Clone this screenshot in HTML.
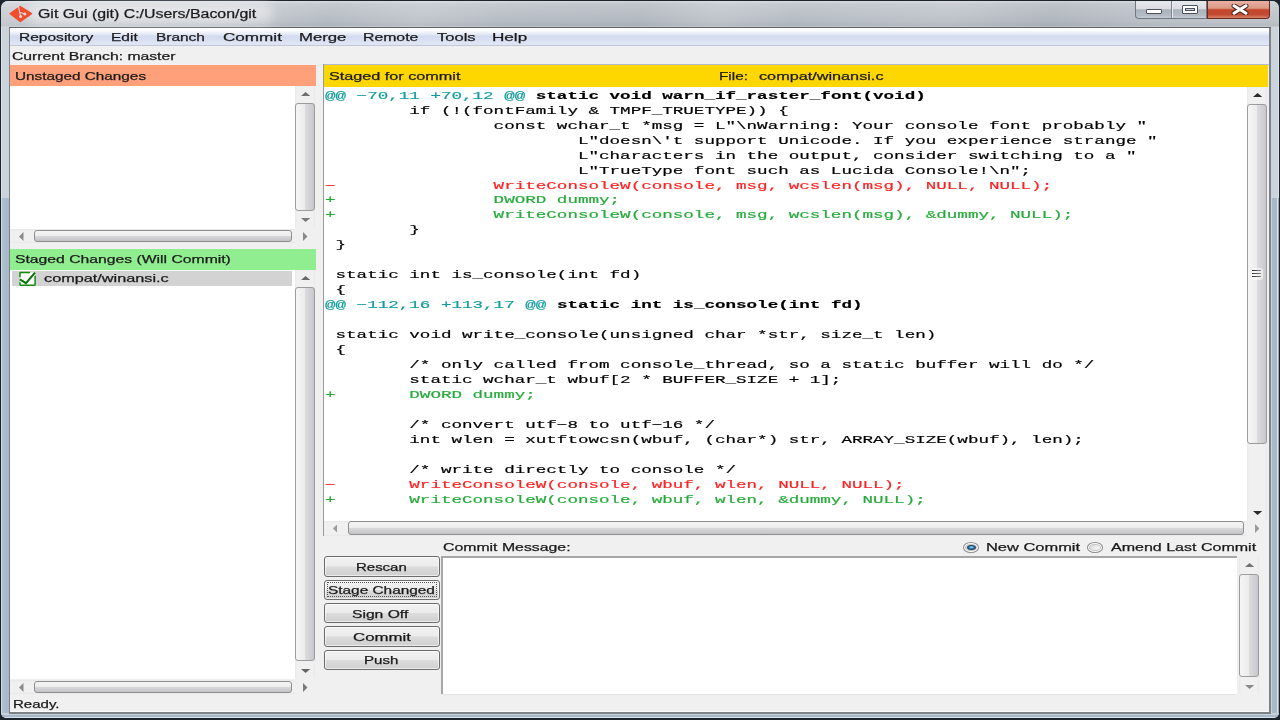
<!DOCTYPE html><html><head><meta charset="utf-8"><style>html,body{margin:0;padding:0;width:1280px;height:720px;overflow:hidden;background:#000}body{position:relative}</style></head><body><div style="position:absolute;left:0;top:0;width:1280px;height:720px;background:#1b232b"></div>
<div style="position:absolute;left:1px;top:0.5px;width:1278px;height:717.5px;border-radius:7px 7px 6px 6px;background:#a9bacb"></div>
<div style="position:absolute;left:1px;top:0.5px;width:1278px;height:198px;border-radius:7px 7px 0 0;background:linear-gradient(180deg,#d6dadf 0px,#c4c9cf 3px,#b6bcc3 20px,#adb3bb 25px,#cfd3d8 26px,#cbd3db 27px,#cbd4dd 100%)"></div>
<div style="position:absolute;left:1px;top:0.5px;width:1278px;height:26px;border-radius:7px 7px 0 0;background:linear-gradient(112deg,rgba(255,255,255,.25) 0%,rgba(255,255,255,.2) 18%,rgba(255,255,255,0) 26%,rgba(255,255,255,.14) 33%,rgba(255,255,255,0) 40%,rgba(0,0,0,.02) 50%,rgba(255,255,255,.12) 56%,rgba(255,255,255,0) 62%,rgba(255,255,255,.1) 74%,rgba(0,0,0,.03) 82%,rgba(255,255,255,.1) 92%)"></div>
<div style="position:absolute;left:1px;top:198px;width:8px;height:515px;background:linear-gradient(90deg,#cdd7e0 0px,#cdd7e0 0.8px,#aebfcf 1.6px,#a6b8c9 100%)"></div>
<div style="position:absolute;left:1270px;top:198px;width:9px;height:515px;background:linear-gradient(90deg,#cbd3db 0px,#cbd3db 1.5px,#a9b8c7 2px,#aab9c8 6.5px,#d9e3ec 7px,#d9e3ec 8px,#5d6870 9px)"></div>
<div style="position:absolute;left:1px;top:27px;width:1px;height:171px;background:#dde3e8"></div>
<div style="position:absolute;left:1278px;top:27px;width:1px;height:171px;background:#dde3e8"></div>
<div style="position:absolute;left:1px;top:713px;width:1278px;height:5px;border-radius:0 0 6px 6px;background:linear-gradient(180deg,#c9d2da 0px,#c9d2da 1.5px,#a9b9c9 2px,#a9b9c9 4px,#d5dfe8 4.2px,#d5dfe8 5px)"></div>
<div style="position:absolute;left:9px;top:26.5px;width:1262.2px;height:687.3px;background:#7d8287"></div>
<div style="position:absolute;left:9px;top:26.8px;width:1262.2px;height:1.0999999999999979px;background:#5f6368"></div>
<div style="position:absolute;left:10px;top:27.9px;width:1259.2px;height:684.1px;background:#f0f0f0"></div>
<div style="position:absolute;left:10px;top:711px;width:1259.2px;height:1px;background:#fafafa"></div>
<div style="position:absolute;left:28px;top:2px;width:245px;height:22px;border-radius:11px;background:rgba(255,255,255,.45);filter:blur(6px)"></div>
<svg style="position:absolute;left:6px;top:2px" width="30" height="24" viewBox="0 0 30 24"><path d="M4.3 11.7 L14.3 4.6 L25.4 11.7 L14.3 19.4 Z" fill="#f24e2c" stroke="#f24e2c" stroke-width="1.6" stroke-linejoin="round"/><path d="M12.4 4.2 L14.6 14.6 M13.6 10.2 L18.8 12" stroke="#cdd6dc" stroke-width="1.1" fill="none"/><circle cx="14.6" cy="14.6" r="1.5" fill="#d3dbe0"/><circle cx="18.8" cy="12" r="1.5" fill="#d3dbe0"/></svg>
<div style="position:absolute;left:1135px;top:1px;width:72px;height:17.5px;border:1px solid #6f7784;border-top:none;border-radius:0 0 0 4px;background:linear-gradient(180deg,#e6e9ec 0%,#d9dde2 45%,#aab2bc 52%,#b4bbc4 85%,#c9ced5 100%);box-sizing:border-box"></div>
<div style="position:absolute;left:1171px;top:1px;width:1px;height:17px;background:#7c8490"></div>
<div style="position:absolute;left:1172px;top:1px;width:1px;height:17px;background:#e8ecf0"></div>
<div style="position:absolute;left:1207px;top:1px;width:63px;height:17.5px;border:1px solid #6b2a1e;border-top:none;border-radius:0 0 4px 0;background:linear-gradient(180deg,#e9b0a2 0%,#de9986 42%,#c4452a 52%,#c24a31 80%,#d8826a 100%);box-sizing:border-box"></div>
<div style="position:absolute;left:1146px;top:9px;width:16px;height:4.5px;background:#fff;border:1px solid #4a5260;border-radius:1px;box-sizing:border-box"></div>
<div style="position:absolute;left:1182px;top:4.8px;width:16px;height:8.8px;border:1px solid #4a5260;background:#fff;border-radius:1px;box-sizing:border-box"><div style="position:absolute;left:2px;top:2px;right:2px;bottom:2px;border:1px solid #4a5260;background:#c9ced6"></div></div>
<svg style="position:absolute;left:1231px;top:3.8px" width="18" height="11" viewBox="0 0 18 11"><path d="M3 1.8 L15 9.2 M15 1.8 L3 9.2" stroke="#4a2a24" stroke-width="5" stroke-linecap="round"/><path d="M3 1.8 L15 9.2 M15 1.8 L3 9.2" stroke="#fff" stroke-width="3" stroke-linecap="round"/></svg>
<div style="position:absolute;left:10px;top:27.9px;width:1259.2px;height:18.1px;background:linear-gradient(180deg,#ffffff 0px,#fafbfd 2.5px,#e6ebf5 6px,#d3dbee 8px,#d9dff2 12px,#e0e5f5 15px,#e0e5f5 16.8px,#c1c7d6 17.2px,#c6ccda 18.1px)"></div>
<div style="position:absolute;left:10px;top:64.5px;width:306.3px;height:21.200000000000003px;background:#ffa07a"></div>
<div style="position:absolute;left:10px;top:85.7px;width:285.3px;height:143.60000000000002px;background:#fff"></div>
<div style="position:absolute;left:295.3px;top:85.7px;width:19.69999999999999px;height:141.3px;background:linear-gradient(90deg,#e8e8e8 0px,#f0f0f0 2px,#f0f0f0 calc(100% - 2px),#e8e8e8 100%)"></div>
<svg style="position:absolute;left:301.15px;top:92.10px" width="9.2" height="4" viewBox="0 0 9.2 4"><path d="M0 4 L4.6 0 L9.2 4 Z" fill="#6e6e6e"/></svg>
<svg style="position:absolute;left:301.15px;top:217.70px" width="9.2" height="4" viewBox="0 0 9.2 4"><path d="M0 0 L4.6 4 L9.2 0 Z" fill="#7a7a7a"/></svg>
<div style="position:absolute;left:295.3px;top:103px;width:19.69999999999999px;height:107.6px;box-sizing:border-box;border:1px solid #9c9c9c;border-radius:3px;background:linear-gradient(90deg,#f5f5f5 0%,#ececec 48%,#dcdcdf 52%,#c8c8cc 100%)"></div>
<div style="position:absolute;left:10px;top:229.3px;width:306px;height:13.699999999999989px;background:#f0f0f0"></div>
<div style="position:absolute;left:10px;top:229.3px;width:285.3px;height:13.5px;background:linear-gradient(180deg,#e8e8e8 0px,#f0f0f0 2px,#f0f0f0 calc(100% - 2px),#e8e8e8 100%)"></div>
<svg style="position:absolute;left:19.00px;top:231.55px" width="4.5" height="9" viewBox="0 0 4.5 9"><path d="M4.5 0 L0 4.5 L4.5 9 Z" fill="#8a8a8a"/></svg>
<div style="position:absolute;left:34.4px;top:229.9px;width:257.6px;height:12.3px;box-sizing:border-box;border:1px solid #8e8e8e;border-radius:3px;background:linear-gradient(180deg,#f5f5f5 0%,#ececec 48%,#d8d8db 52%,#c4c4c8 100%)"></div>
<div style="position:absolute;left:295.3px;top:229.3px;width:19.69999999999999px;height:13.5px;background:#f0f0f0"></div>
<svg style="position:absolute;left:303.25px;top:231.50px" width="4.5" height="9" viewBox="0 0 4.5 9"><path d="M0 0 L4.5 4.5 L0 9 Z" fill="#8a8a8a"/></svg>
<div style="position:absolute;left:10px;top:248.7px;width:306.3px;height:20.900000000000034px;background:#90ee90"></div>
<div style="position:absolute;left:10px;top:269.6px;width:285.3px;height:409.9px;background:#fff"></div>
<div style="position:absolute;left:12px;top:270.7px;width:280.2px;height:15.699999999999989px;background:#d3d3d3"></div>
<svg style="position:absolute;left:18px;top:270px" width="20" height="18" viewBox="0 0 20 18"><rect x="2" y="2.4" width="15.1" height="12.8" rx="0.6" fill="#fff"/><path d="M2 7.3 L2 3 Q2 2.4 2.6 2.4 L12 2.4 M17.1 5.8 L17.1 14.6 Q17.1 15.2 16.5 15.2 L2.6 15.2 Q2 15.2 2 14.6 L2 12.3" fill="none" stroke="#108a10" stroke-width="1.5"/><path d="M1.8 9.4 L8 13.2 L17 2.6" fill="none" stroke="#067406" stroke-width="2"/></svg>
<div style="position:absolute;left:295.3px;top:269.6px;width:19.69999999999999px;height:408.69999999999993px;background:linear-gradient(90deg,#e8e8e8 0px,#f0f0f0 2px,#f0f0f0 calc(100% - 2px),#e8e8e8 100%)"></div>
<svg style="position:absolute;left:301.15px;top:276.00px" width="9.2" height="4" viewBox="0 0 9.2 4"><path d="M0 4 L4.6 0 L9.2 4 Z" fill="#6a6a6a"/></svg>
<svg style="position:absolute;left:301.15px;top:669.00px" width="9.2" height="4" viewBox="0 0 9.2 4"><path d="M0 0 L4.6 4 L9.2 0 Z" fill="#636363"/></svg>
<div style="position:absolute;left:295.3px;top:287px;width:19.69999999999999px;height:374.4px;box-sizing:border-box;border:1px solid #9c9c9c;border-radius:3px;background:linear-gradient(90deg,#f5f5f5 0%,#ececec 48%,#dcdcdf 52%,#c8c8cc 100%)"></div>
<div style="position:absolute;left:10px;top:680px;width:285.3px;height:14px;background:linear-gradient(180deg,#e8e8e8 0px,#f0f0f0 2px,#f0f0f0 calc(100% - 2px),#e8e8e8 100%)"></div>
<svg style="position:absolute;left:19.00px;top:682.50px" width="4.5" height="9" viewBox="0 0 4.5 9"><path d="M4.5 0 L0 4.5 L4.5 9 Z" fill="#8a8a8a"/></svg>
<div style="position:absolute;left:34.4px;top:680.6px;width:257.8px;height:12.8px;box-sizing:border-box;border:1px solid #8e8e8e;border-radius:3px;background:linear-gradient(180deg,#f5f5f5 0%,#ececec 48%,#d8d8db 52%,#c4c4c8 100%)"></div>
<svg style="position:absolute;left:303.25px;top:682.50px" width="4.5" height="9" viewBox="0 0 4.5 9"><path d="M0 0 L4.5 4.5 L0 9 Z" fill="#7a7a7a"/></svg>
<div style="position:absolute;left:322.5px;top:63.8px;width:946.5px;height:472.2px;background:#9a9a9a"></div>
<div style="position:absolute;left:323.5px;top:63.8px;width:945.5px;height:1.0px;background:#b3bbd2"></div>
<div style="position:absolute;left:323.5px;top:64.8px;width:945.5px;height:471.2px;background:#f0f0f0"></div>
<div style="position:absolute;left:323.5px;top:64.8px;width:944.5px;height:21.900000000000006px;background:#ffd700"></div>
<div style="position:absolute;left:323.5px;top:86.7px;width:923.5px;height:433.90000000000003px;background:#fff"></div>
<div style="position:absolute;left:1247px;top:86.7px;width:20px;height:433.3px;background:linear-gradient(90deg,#e8e8e8 0px,#f0f0f0 2px,#f0f0f0 calc(100% - 2px),#e8e8e8 100%)"></div>
<svg style="position:absolute;left:1253.00px;top:93.10px" width="9.2" height="4" viewBox="0 0 9.2 4"><path d="M0 4 L4.6 0 L9.2 4 Z" fill="#2b2b2b"/></svg>
<svg style="position:absolute;left:1253.00px;top:510.70px" width="9.2" height="4" viewBox="0 0 9.2 4"><path d="M0 0 L4.6 4 L9.2 0 Z" fill="#2b2b2b"/></svg>
<div style="position:absolute;left:1247px;top:104px;width:20px;height:340.2px;box-sizing:border-box;border:1px solid #9c9c9c;border-radius:3px;background:linear-gradient(90deg,#f5f5f5 0%,#ececec 48%,#dcdcdf 52%,#c8c8cc 100%)"></div>
<div style="position:absolute;left:1252.10px;top:268.10px;width:11px;height:12px;border-radius:3px;background:rgba(255,255,255,.55)"></div>
<div style="position:absolute;left:1252.3px;top:270px;width:8.6px;height:1.2px;background:linear-gradient(90deg,#2e2e2e,#505050 40%,#8a8a8a)"></div>
<div style="position:absolute;left:1252.3px;top:273px;width:8.6px;height:1.2px;background:linear-gradient(90deg,#2e2e2e,#505050 40%,#8a8a8a)"></div>
<div style="position:absolute;left:1252.3px;top:276px;width:8.6px;height:1.2px;background:linear-gradient(90deg,#2e2e2e,#505050 40%,#8a8a8a)"></div>
<div style="position:absolute;left:323.5px;top:520.6px;width:923.5px;height:15.0px;background:linear-gradient(180deg,#e8e8e8 0px,#f0f0f0 2px,#f0f0f0 calc(100% - 2px),#e8e8e8 100%)"></div>
<svg style="position:absolute;left:332.50px;top:523.60px" width="4.5" height="9" viewBox="0 0 4.5 9"><path d="M4.5 0 L0 4.5 L4.5 9 Z" fill="#9a9a9a"/></svg>
<div style="position:absolute;left:347.9px;top:521.2px;width:895.8000000000001px;height:13.8px;box-sizing:border-box;border:1px solid #8e8e8e;border-radius:3px;background:linear-gradient(180deg,#f5f5f5 0%,#ececec 48%,#d8d8db 52%,#c4c4c8 100%)"></div>
<svg style="position:absolute;left:1254.75px;top:523.50px" width="4.5" height="9" viewBox="0 0 4.5 9"><path d="M0 0 L4.5 4.5 L0 9 Z" fill="#9a9a9a"/></svg>
<div style="position:absolute;left:963.1px;top:541.7px;width:16.299999999999955px;height:11.0px;box-sizing:border-box;border:1.3px solid #8c8c8c;border-radius:50%;background:#fbfbfb"></div>
<div style="position:absolute;left:965.4px;top:543.5px;width:11.699999999999955px;height:7.4px;box-sizing:border-box;border:1px solid #c4c4c4;border-radius:50%;background:linear-gradient(135deg,#d6d6d6 0%,#ececec 50%,#fdfdfd 100%)"></div>
<div style="position:absolute;left:966.65px;top:544.6px;width:9.2px;height:5.2px;box-sizing:border-box;border:1px solid #1f3f5a;border-radius:50%;background:radial-gradient(ellipse at 50% 35%,#bfe8fb 0%,#3d98d0 40%,#17609a 75%,#0e3a62 100%)"></div>
<div style="position:absolute;left:1086.9px;top:541.7px;width:16.399999999999864px;height:11.0px;box-sizing:border-box;border:1.3px solid #8c8c8c;border-radius:50%;background:#fbfbfb"></div>
<div style="position:absolute;left:1089.2px;top:543.5px;width:11.799999999999864px;height:7.4px;box-sizing:border-box;border:1px solid #c4c4c4;border-radius:50%;background:linear-gradient(135deg,#d6d6d6 0%,#ececec 50%,#fdfdfd 100%)"></div>
<div style="position:absolute;left:324.2px;top:556px;width:115.5px;height:20.5px;box-sizing:border-box;border:1px solid #6c6c6c;border-radius:3px;background:linear-gradient(180deg,#f2f2f2 0%,#ebebeb 48%,#dcdcdc 52%,#cfcfcf 100%);box-shadow:inset 0 0 0 1px rgba(255,255,255,.6)"></div>
<div style="position:absolute;left:324.2px;top:579.6px;width:115.5px;height:20.399999999999977px;box-sizing:border-box;border:1px solid #6c6c6c;border-radius:3px;background:linear-gradient(180deg,#f2f2f2 0%,#ebebeb 48%,#dcdcdc 52%,#cfcfcf 100%);box-shadow:inset 0 0 0 1px rgba(255,255,255,.6)"></div>
<div style="position:absolute;left:327px;top:582.1px;width:110px;height:15.399999999999977px;box-sizing:border-box;border:1px dotted #555"></div>
<div style="position:absolute;left:324.2px;top:602.8px;width:115.5px;height:20.5px;box-sizing:border-box;border:1px solid #6c6c6c;border-radius:3px;background:linear-gradient(180deg,#f2f2f2 0%,#ebebeb 48%,#dcdcdc 52%,#cfcfcf 100%);box-shadow:inset 0 0 0 1px rgba(255,255,255,.6)"></div>
<div style="position:absolute;left:324.2px;top:626.3px;width:115.5px;height:20.300000000000068px;box-sizing:border-box;border:1px solid #6c6c6c;border-radius:3px;background:linear-gradient(180deg,#f2f2f2 0%,#ebebeb 48%,#dcdcdc 52%,#cfcfcf 100%);box-shadow:inset 0 0 0 1px rgba(255,255,255,.6)"></div>
<div style="position:absolute;left:324.2px;top:649.6px;width:115.5px;height:20.699999999999932px;box-sizing:border-box;border:1px solid #6c6c6c;border-radius:3px;background:linear-gradient(180deg,#f2f2f2 0%,#ebebeb 48%,#dcdcdc 52%,#cfcfcf 100%);box-shadow:inset 0 0 0 1px rgba(255,255,255,.6)"></div>
<div style="position:absolute;left:441.1px;top:556px;width:795.9999999999999px;height:138.39999999999998px;background:#a6a6a6"></div>
<div style="position:absolute;left:443px;top:558px;width:794.0999999999999px;height:136.39999999999998px;background:#fff"></div>
<div style="position:absolute;left:441.1px;top:693.6px;width:795.9999999999999px;height:1.0px;background:#e6e6e6"></div>
<div style="position:absolute;left:1239.2px;top:557px;width:19.799999999999955px;height:137.39999999999998px;background:linear-gradient(90deg,#e8e8e8 0px,#f0f0f0 2px,#f0f0f0 calc(100% - 2px),#e8e8e8 100%)"></div>
<svg style="position:absolute;left:1245.10px;top:563.40px" width="9.2" height="4" viewBox="0 0 9.2 4"><path d="M0 4 L4.6 0 L9.2 4 Z" fill="#727272"/></svg>
<svg style="position:absolute;left:1245.10px;top:685.10px" width="9.2" height="4" viewBox="0 0 9.2 4"><path d="M0 0 L4.6 4 L9.2 0 Z" fill="#8a8a8a"/></svg>
<div style="position:absolute;left:1239.2px;top:573.8px;width:19.799999999999955px;height:103.40000000000009px;box-sizing:border-box;border:1px solid #9c9c9c;border-radius:3px;background:linear-gradient(90deg,#f5f5f5 0%,#ececec 48%,#dcdcdf 52%,#c8c8cc 100%)"></div>
<div style="position:absolute;left:37.67px;top:7.90px;font-family:'Liberation Sans',sans-serif;font-size:12px;font-weight:normal;line-height:12px;white-space:pre;color:#1b1b1b;-webkit-text-stroke:0.25px #1b1b1b;transform:scaleX(1.3250);transform-origin:0 0;">Git Gui (git) C:/Users/Bacon/git</div>
<div style="position:absolute;left:18.75px;top:32.40px;font-family:'Liberation Sans',sans-serif;font-size:11.5px;font-weight:normal;line-height:11.5px;white-space:pre;color:#1a1a1a;-webkit-text-stroke:0.25px #1a1a1a;transform:scaleX(1.3500);transform-origin:0 0;">Repository</div>
<div style="position:absolute;left:111.35px;top:32.40px;font-family:'Liberation Sans',sans-serif;font-size:11.5px;font-weight:normal;line-height:11.5px;white-space:pre;color:#1a1a1a;-webkit-text-stroke:0.25px #1a1a1a;transform:scaleX(1.3474);transform-origin:0 0;">Edit</div>
<div style="position:absolute;left:156.16px;top:32.40px;font-family:'Liberation Sans',sans-serif;font-size:11.5px;font-weight:normal;line-height:11.5px;white-space:pre;color:#1a1a1a;-webkit-text-stroke:0.25px #1a1a1a;transform:scaleX(1.3429);transform-origin:0 0;">Branch</div>
<div style="position:absolute;left:222.71px;top:32.40px;font-family:'Liberation Sans',sans-serif;font-size:11.5px;font-weight:normal;line-height:11.5px;white-space:pre;color:#1a1a1a;-webkit-text-stroke:0.25px #1a1a1a;transform:scaleX(1.4872);transform-origin:0 0;">Commit</div>
<div style="position:absolute;left:298.75px;top:32.40px;font-family:'Liberation Sans',sans-serif;font-size:11.5px;font-weight:normal;line-height:11.5px;white-space:pre;color:#1a1a1a;-webkit-text-stroke:0.25px #1a1a1a;transform:scaleX(1.4548);transform-origin:0 0;">Merge</div>
<div style="position:absolute;left:362.53px;top:32.40px;font-family:'Liberation Sans',sans-serif;font-size:11.5px;font-weight:normal;line-height:11.5px;white-space:pre;color:#1a1a1a;-webkit-text-stroke:0.25px #1a1a1a;transform:scaleX(1.3744);transform-origin:0 0;">Remote</div>
<div style="position:absolute;left:436.80px;top:32.40px;font-family:'Liberation Sans',sans-serif;font-size:11.5px;font-weight:normal;line-height:11.5px;white-space:pre;color:#1a1a1a;-webkit-text-stroke:0.25px #1a1a1a;transform:scaleX(1.4385);transform-origin:0 0;">Tools</div>
<div style="position:absolute;left:491.51px;top:32.40px;font-family:'Liberation Sans',sans-serif;font-size:11.5px;font-weight:normal;line-height:11.5px;white-space:pre;color:#1a1a1a;-webkit-text-stroke:0.25px #1a1a1a;transform:scaleX(1.4864);transform-origin:0 0;">Help</div>
<div style="position:absolute;left:12.23px;top:51.00px;font-family:'Liberation Sans',sans-serif;font-size:11.5px;font-weight:normal;line-height:11.5px;white-space:pre;color:#1a1a1a;-webkit-text-stroke:0.25px #1a1a1a;transform:scaleX(1.3678);transform-origin:0 0;">Current Branch: master</div>
<div style="position:absolute;left:15.07px;top:70.70px;font-family:'Liberation Sans',sans-serif;font-size:11.5px;font-weight:normal;line-height:11.5px;white-space:pre;color:#1a1a1a;-webkit-text-stroke:0.25px #1a1a1a;transform:scaleX(1.3309);transform-origin:0 0;">Unstaged Changes</div>
<div style="position:absolute;left:14.83px;top:254.00px;font-family:'Liberation Sans',sans-serif;font-size:11.5px;font-weight:normal;line-height:11.5px;white-space:pre;color:#1a1a1a;-webkit-text-stroke:0.25px #1a1a1a;transform:scaleX(1.3673);transform-origin:0 0;">Staged Changes (Will Commit)</div>
<div style="position:absolute;left:43.60px;top:273.20px;font-family:'Liberation Sans',sans-serif;font-size:11.5px;font-weight:normal;line-height:11.5px;white-space:pre;color:#1a1a1a;-webkit-text-stroke:0.25px #1a1a1a;transform:scaleX(1.4136);transform-origin:0 0;">compat/winansi.c</div>
<div style="position:absolute;left:12.59px;top:698.80px;font-family:'Liberation Sans',sans-serif;font-size:11.5px;font-weight:normal;line-height:11.5px;white-space:pre;color:#1a1a1a;-webkit-text-stroke:0.25px #1a1a1a;transform:scaleX(1.3059);transform-origin:0 0;">Ready.</div>
<div style="position:absolute;left:328.79px;top:71.30px;font-family:'Liberation Sans',sans-serif;font-size:11.5px;font-weight:normal;line-height:11.5px;white-space:pre;color:#1a1a1a;-webkit-text-stroke:0.25px #1a1a1a;transform:scaleX(1.4087);transform-origin:0 0;">Staged for commit</div>
<div style="position:absolute;left:718.97px;top:71.30px;font-family:'Liberation Sans',sans-serif;font-size:11.5px;font-weight:normal;line-height:11.5px;white-space:pre;color:#1a1a1a;-webkit-text-stroke:0.25px #1a1a1a;transform:scaleX(1.3300);transform-origin:0 0;">File:</div>
<div style="position:absolute;left:758.60px;top:71.30px;font-family:'Liberation Sans',sans-serif;font-size:11.5px;font-weight:normal;line-height:11.5px;white-space:pre;color:#1a1a1a;-webkit-text-stroke:0.25px #1a1a1a;transform:scaleX(1.4114);transform-origin:0 0;">compat/winansi.c</div>
<div style="position:absolute;left:443.37px;top:541.75px;font-family:'Liberation Sans',sans-serif;font-size:11.5px;font-weight:normal;line-height:11.5px;white-space:pre;color:#1a1a1a;-webkit-text-stroke:0.25px #1a1a1a;transform:scaleX(1.3764);transform-origin:0 0;">Commit Message:</div>
<div style="position:absolute;left:986.27px;top:541.80px;font-family:'Liberation Sans',sans-serif;font-size:11.5px;font-weight:normal;line-height:11.5px;white-space:pre;color:#1a1a1a;-webkit-text-stroke:0.25px #1a1a1a;transform:scaleX(1.4292);transform-origin:0 0;">New Commit</div>
<div style="position:absolute;left:1111.25px;top:541.80px;font-family:'Liberation Sans',sans-serif;font-size:11.5px;font-weight:normal;line-height:11.5px;white-space:pre;color:#1a1a1a;-webkit-text-stroke:0.25px #1a1a1a;transform:scaleX(1.3928);transform-origin:0 0;">Amend Last Commit</div>
<div style="position:absolute;left:355.95px;top:561.60px;font-family:'Liberation Sans',sans-serif;font-size:11.5px;font-weight:normal;line-height:11.5px;white-space:pre;color:#1a1a1a;-webkit-text-stroke:0.25px #1a1a1a;transform:scaleX(1.3014);transform-origin:0 0;">Rescan</div>
<div style="position:absolute;left:328.41px;top:585.20px;font-family:'Liberation Sans',sans-serif;font-size:11.5px;font-weight:normal;line-height:11.5px;white-space:pre;color:#1a1a1a;-webkit-text-stroke:0.25px #1a1a1a;transform:scaleX(1.3378);transform-origin:0 0;">Stage Changed</div>
<div style="position:absolute;left:352.14px;top:608.50px;font-family:'Liberation Sans',sans-serif;font-size:11.5px;font-weight:normal;line-height:11.5px;white-space:pre;color:#1a1a1a;-webkit-text-stroke:0.25px #1a1a1a;transform:scaleX(1.3610);transform-origin:0 0;">Sign Off</div>
<div style="position:absolute;left:352.54px;top:631.80px;font-family:'Liberation Sans',sans-serif;font-size:11.5px;font-weight:normal;line-height:11.5px;white-space:pre;color:#1a1a1a;-webkit-text-stroke:0.25px #1a1a1a;transform:scaleX(1.4615);transform-origin:0 0;">Commit</div>
<div style="position:absolute;left:364.39px;top:654.70px;font-family:'Liberation Sans',sans-serif;font-size:11.5px;font-weight:normal;line-height:11.5px;white-space:pre;color:#1a1a1a;-webkit-text-stroke:0.25px #1a1a1a;transform:scaleX(1.3120);transform-origin:0 0;">Push</div>
<div style="position:absolute;left:325.4px;top:90.70px;font-family:'Liberation Mono',monospace;font-size:11.3px;line-height:11.3px;white-space:pre;transform:scaleX(1.5546);transform-origin:0 0"><span style="color:#129c9f;font-weight:normal;-webkit-text-stroke:0.18px #129c9f">@@ −70,11 +70,12 @@</span><span style="color:#000;font-weight:bold;-webkit-text-stroke:0.18px #000"> static void warn_if_raster_font(void)</span></div>
<div style="position:absolute;left:325.4px;top:105.67px;font-family:'Liberation Mono',monospace;font-size:11.3px;line-height:11.3px;white-space:pre;transform:scaleX(1.5546);transform-origin:0 0"><span style="color:#000;font-weight:normal;-webkit-text-stroke:0.18px #000">        if (!(fontFamily &amp; TMPF_TRUETYPE)) {</span></div>
<div style="position:absolute;left:325.4px;top:120.64px;font-family:'Liberation Mono',monospace;font-size:11.3px;line-height:11.3px;white-space:pre;transform:scaleX(1.5546);transform-origin:0 0"><span style="color:#000;font-weight:normal;-webkit-text-stroke:0.18px #000">                const wchar_t *msg = L&quot;\nWarning: Your console font probably &quot;</span></div>
<div style="position:absolute;left:325.4px;top:135.61px;font-family:'Liberation Mono',monospace;font-size:11.3px;line-height:11.3px;white-space:pre;transform:scaleX(1.5546);transform-origin:0 0"><span style="color:#000;font-weight:normal;-webkit-text-stroke:0.18px #000">                        L&quot;doesn\&#x27;t support Unicode. If you experience strange &quot;</span></div>
<div style="position:absolute;left:325.4px;top:150.58px;font-family:'Liberation Mono',monospace;font-size:11.3px;line-height:11.3px;white-space:pre;transform:scaleX(1.5546);transform-origin:0 0"><span style="color:#000;font-weight:normal;-webkit-text-stroke:0.18px #000">                        L&quot;characters in the output, consider switching to a &quot;</span></div>
<div style="position:absolute;left:325.4px;top:165.55px;font-family:'Liberation Mono',monospace;font-size:11.3px;line-height:11.3px;white-space:pre;transform:scaleX(1.5546);transform-origin:0 0"><span style="color:#000;font-weight:normal;-webkit-text-stroke:0.18px #000">                        L&quot;TrueType font such as Lucida Console!\n&quot;;</span></div>
<div style="position:absolute;left:325.4px;top:180.52px;font-family:'Liberation Mono',monospace;font-size:11.3px;line-height:11.3px;white-space:pre;transform:scaleX(1.5546);transform-origin:0 0"><span style="color:#ff2222;font-weight:normal;-webkit-text-stroke:0.18px #ff2222">−               WriteConsoleW(console, msg, wcslen(msg), NULL, NULL);</span></div>
<div style="position:absolute;left:325.4px;top:195.49px;font-family:'Liberation Mono',monospace;font-size:11.3px;line-height:11.3px;white-space:pre;transform:scaleX(1.5546);transform-origin:0 0"><span style="color:#25ab3a;font-weight:normal;-webkit-text-stroke:0.18px #25ab3a">+               DWORD dummy;</span></div>
<div style="position:absolute;left:325.4px;top:210.46px;font-family:'Liberation Mono',monospace;font-size:11.3px;line-height:11.3px;white-space:pre;transform:scaleX(1.5546);transform-origin:0 0"><span style="color:#25ab3a;font-weight:normal;-webkit-text-stroke:0.18px #25ab3a">+               WriteConsoleW(console, msg, wcslen(msg), &amp;dummy, NULL);</span></div>
<div style="position:absolute;left:325.4px;top:225.43px;font-family:'Liberation Mono',monospace;font-size:11.3px;line-height:11.3px;white-space:pre;transform:scaleX(1.5546);transform-origin:0 0"><span style="color:#000;font-weight:normal;-webkit-text-stroke:0.18px #000">        }</span></div>
<div style="position:absolute;left:325.4px;top:240.40px;font-family:'Liberation Mono',monospace;font-size:11.3px;line-height:11.3px;white-space:pre;transform:scaleX(1.5546);transform-origin:0 0"><span style="color:#000;font-weight:normal;-webkit-text-stroke:0.18px #000"> }</span></div>
<div style="position:absolute;left:325.4px;top:270.34px;font-family:'Liberation Mono',monospace;font-size:11.3px;line-height:11.3px;white-space:pre;transform:scaleX(1.5546);transform-origin:0 0"><span style="color:#000;font-weight:normal;-webkit-text-stroke:0.18px #000"> static int is_console(int fd)</span></div>
<div style="position:absolute;left:325.4px;top:285.31px;font-family:'Liberation Mono',monospace;font-size:11.3px;line-height:11.3px;white-space:pre;transform:scaleX(1.5546);transform-origin:0 0"><span style="color:#000;font-weight:normal;-webkit-text-stroke:0.18px #000"> {</span></div>
<div style="position:absolute;left:325.4px;top:300.28px;font-family:'Liberation Mono',monospace;font-size:11.3px;line-height:11.3px;white-space:pre;transform:scaleX(1.5546);transform-origin:0 0"><span style="color:#129c9f;font-weight:normal;-webkit-text-stroke:0.18px #129c9f">@@ −112,16 +113,17 @@</span><span style="color:#000;font-weight:bold;-webkit-text-stroke:0.18px #000"> static int is_console(int fd)</span></div>
<div style="position:absolute;left:325.4px;top:330.22px;font-family:'Liberation Mono',monospace;font-size:11.3px;line-height:11.3px;white-space:pre;transform:scaleX(1.5546);transform-origin:0 0"><span style="color:#000;font-weight:normal;-webkit-text-stroke:0.18px #000"> static void write_console(unsigned char *str, size_t len)</span></div>
<div style="position:absolute;left:325.4px;top:345.19px;font-family:'Liberation Mono',monospace;font-size:11.3px;line-height:11.3px;white-space:pre;transform:scaleX(1.5546);transform-origin:0 0"><span style="color:#000;font-weight:normal;-webkit-text-stroke:0.18px #000"> {</span></div>
<div style="position:absolute;left:325.4px;top:360.16px;font-family:'Liberation Mono',monospace;font-size:11.3px;line-height:11.3px;white-space:pre;transform:scaleX(1.5546);transform-origin:0 0"><span style="color:#000;font-weight:normal;-webkit-text-stroke:0.18px #000">        /* only called from console_thread, so a static buffer will do */</span></div>
<div style="position:absolute;left:325.4px;top:375.13px;font-family:'Liberation Mono',monospace;font-size:11.3px;line-height:11.3px;white-space:pre;transform:scaleX(1.5546);transform-origin:0 0"><span style="color:#000;font-weight:normal;-webkit-text-stroke:0.18px #000">        static wchar_t wbuf[2 * BUFFER_SIZE + 1];</span></div>
<div style="position:absolute;left:325.4px;top:390.10px;font-family:'Liberation Mono',monospace;font-size:11.3px;line-height:11.3px;white-space:pre;transform:scaleX(1.5546);transform-origin:0 0"><span style="color:#25ab3a;font-weight:normal;-webkit-text-stroke:0.18px #25ab3a">+       DWORD dummy;</span></div>
<div style="position:absolute;left:325.4px;top:420.04px;font-family:'Liberation Mono',monospace;font-size:11.3px;line-height:11.3px;white-space:pre;transform:scaleX(1.5546);transform-origin:0 0"><span style="color:#000;font-weight:normal;-webkit-text-stroke:0.18px #000">        /* convert utf−8 to utf−16 */</span></div>
<div style="position:absolute;left:325.4px;top:435.01px;font-family:'Liberation Mono',monospace;font-size:11.3px;line-height:11.3px;white-space:pre;transform:scaleX(1.5546);transform-origin:0 0"><span style="color:#000;font-weight:normal;-webkit-text-stroke:0.18px #000">        int wlen = xutftowcsn(wbuf, (char*) str, ARRAY_SIZE(wbuf), len);</span></div>
<div style="position:absolute;left:325.4px;top:464.95px;font-family:'Liberation Mono',monospace;font-size:11.3px;line-height:11.3px;white-space:pre;transform:scaleX(1.5546);transform-origin:0 0"><span style="color:#000;font-weight:normal;-webkit-text-stroke:0.18px #000">        /* write directly to console */</span></div>
<div style="position:absolute;left:325.4px;top:479.92px;font-family:'Liberation Mono',monospace;font-size:11.3px;line-height:11.3px;white-space:pre;transform:scaleX(1.5546);transform-origin:0 0"><span style="color:#ff2222;font-weight:normal;-webkit-text-stroke:0.18px #ff2222">−       WriteConsoleW(console, wbuf, wlen, NULL, NULL);</span></div>
<div style="position:absolute;left:325.4px;top:494.89px;font-family:'Liberation Mono',monospace;font-size:11.3px;line-height:11.3px;white-space:pre;transform:scaleX(1.5546);transform-origin:0 0"><span style="color:#25ab3a;font-weight:normal;-webkit-text-stroke:0.18px #25ab3a">+       WriteConsoleW(console, wbuf, wlen, &amp;dummy, NULL);</span></div></body></html>
